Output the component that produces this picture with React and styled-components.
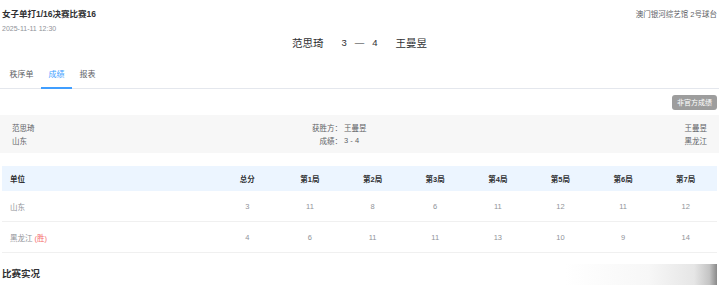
// Match Result Page

// Importing Helpers
import React from "react";
import styled, { createGlobalStyle } from "styled-components";

// Global Style Definitions
const GlobalStyle = createGlobalStyle`
  body {
    margin: 0;
    background: #fff;
    font-family: "Liberation Sans", "Noto Sans CJK SC", sans-serif;
  }
`;

// Page Container Definitions
const Page = styled.div`
  position: relative;
  width: 719px;
  height: 288px;
  overflow: hidden;
  padding: 0 2px;
  box-sizing: border-box;
`;

// Header Style Definitions
const Header = styled.div`
  display: flex;
  justify-content: space-between;
  align-items: flex-start;
  padding-top: 8px;
`;

const TitleBlock = styled.div`
  display: flex;
  flex-direction: column;
  gap: 3px;
`;

const Title = styled.div`
  font-size: 8.5px;
  line-height: 12px;
  font-weight: bold;
  color: #303133;
`;

const DateText = styled.div`
  font-size: 7px;
  line-height: 12px;
  color: #909399;
`;

const Venue = styled.div`
  margin-top: 1px;
  font-size: 7.5px;
  line-height: 12px;
  color: #606266;
`;

// Score Line Style Definitions
const ScoreLine = styled.div`
  display: flex;
  justify-content: center;
  align-items: center;
  height: 14px;
  font-size: 10.5px;
  color: #303133;
`;

const Player = styled.span`
  margin: 0 ${({ gap }) => gap}px;
`;

const Score = styled.span`
  display: flex;
  align-items: center;
  gap: 8px;
  font-size: 9.5px;
`;

// Tab Style Definitions
const TabBar = styled.div`
  display: flex;
  height: 28px;
  margin: 12px -2px 0;
  padding-left: 2px;
  box-shadow: inset 0 -1px 0 #e4e7ed;
`;

const Tab = styled.div`
  position: relative;
  padding: 0 7.5px;
  line-height: 28px;
  font-size: 8px;
  color: ${({ active }) => (active ? "#409eff" : "#606266")};

  &::after {
    content: "";
    position: absolute;
    left: 0;
    right: 0;
    bottom: 0;
    height: 2px;
    background: ${({ active }) => (active ? "#409eff" : "transparent")};
  }
`;

// Toolbar Style Definitions
const Toolbar = styled.div`
  display: flex;
  justify-content: flex-end;
  margin-top: 6px;
`;

const GrayButton = styled.div`
  width: 45px;
  height: 15px;
  line-height: 15px;
  text-align: center;
  border-radius: 3px;
  background: #9d9d9d;
  color: #fff;
  font-size: 7px;
`;

// Summary Panel Style Definitions
const Summary = styled.div`
  display: grid;
  grid-template-columns: 294px 36px 1fr auto;
  grid-auto-rows: 13px;
  align-items: center;
  margin: 5px -2px 0;
  padding: 6px 12px;
  background: #f7f7f7;
  font-size: 7.5px;
  color: #606266;
`;

const Cell = styled.div`
  text-align: ${({ align }) => align || "left"};
  white-space: nowrap;
`;

// Table Style Definitions
const Table = styled.div`
  margin-top: 13px;
`;

const Row = styled.div`
  display: grid;
  grid-template-columns: 214px repeat(8, 1fr);
  align-items: center;
  height: ${({ head }) => (head ? "25px" : "30px")};
  background: ${({ head }) => (head ? "#ecf5ff" : "#fff")};
  border-bottom: ${({ head }) => (head ? "none" : "1px solid #f0f0f0")};
  font-size: 7.5px;
  font-weight: ${({ head }) => (head ? "bold" : "normal")};
  color: ${({ head }) => (head ? "#303133" : "#909399")};
`;

const TableCell = styled.div`
  text-align: center;

  &:first-child {
    text-align: left;
    padding-left: 8px;
  }
`;

const Winner = styled.span`
  color: #f56c6c;
`;

// Section Title Style Definitions
const SectionTitle = styled.div`
  margin-top: 14px;
  line-height: 14px;
  font-size: 9.5px;
  font-weight: bold;
  color: #303133;
`;

// Scroll Shade Overlay
const Shade = styled.div`
  position: absolute;
  left: 565px;
  top: 264px;
  width: 152px;
  height: 21px;
  background: linear-gradient(
    to right,
    rgba(255, 255, 255, 0) 0%,
    #f7f7f7 55%,
    #e6e6e6 85%,
    #c4c4c4 95%,
    #8a8a8a 100%
  );
`;

// Data
const games = ["总分", "第1局", "第2局", "第3局", "第4局", "第5局", "第6局", "第7局"];
const teams = [
  { name: "山东", win: false, scores: [3, 11, 8, 6, 11, 12, 11, 12] },
  { name: "黑龙江", win: true, scores: [4, 6, 11, 11, 13, 10, 9, 14] },
];

// Functional Component
const App = () => {
  return (
    <>
      <GlobalStyle />
      <Page>
        <Header>
          <TitleBlock>
            <Title>女子单打1/16决赛比赛16</Title>
            <DateText>2025-11-11 12:30</DateText>
          </TitleBlock>
          <Venue>澳门银河综艺馆 2号球台</Venue>
        </Header>

        <ScoreLine>
          <Player gap={18}>范思琦</Player>
          <Score>
            <span>3</span>
            <span>—</span>
            <span>4</span>
          </Score>
          <Player gap={18}>王曼昱</Player>
        </ScoreLine>

        <TabBar>
          <Tab>秩序单</Tab>
          <Tab active>成绩</Tab>
          <Tab>报表</Tab>
        </TabBar>

        <Toolbar>
          <GrayButton>非官方成绩</GrayButton>
        </Toolbar>

        <Summary>
          <Cell>范思琦</Cell>
          <Cell align="right">获胜方：</Cell>
          <Cell>&nbsp;王曼昱</Cell>
          <Cell align="right">王曼昱</Cell>
          <Cell>山东</Cell>
          <Cell align="right">成绩：</Cell>
          <Cell>&nbsp;3 - 4</Cell>
          <Cell align="right">黑龙江</Cell>
        </Summary>

        <Table>
          <Row head>
            <TableCell>单位</TableCell>
            {games.map((g) => (
              <TableCell key={g}>{g}</TableCell>
            ))}
          </Row>
          {teams.map((t) => (
            <Row key={t.name}>
              <TableCell>
                {t.name}
                {t.win && <Winner> (胜)</Winner>}
              </TableCell>
              {t.scores.map((s, i) => (
                <TableCell key={i}>{s}</TableCell>
              ))}
            </Row>
          ))}
        </Table>

        <SectionTitle>比赛实况</SectionTitle>
        <Shade />
      </Page>
    </>
  );
};

// Default Export
export default App;
